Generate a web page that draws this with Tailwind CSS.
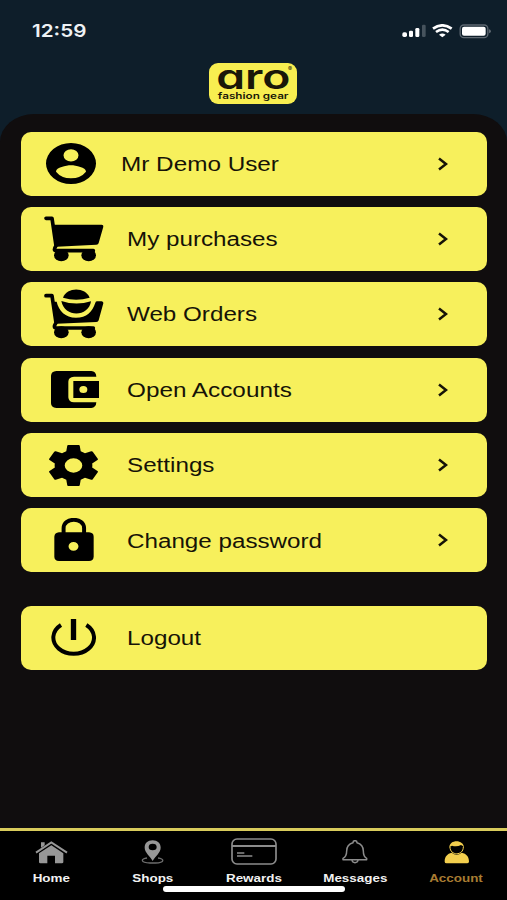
<!DOCTYPE html>
<html lang="en">
<head>
    <meta charset="UTF-8">
    <meta name="viewport" content="width=device-width, initial-scale=1.0">
    <title>Account</title>
    <script src="https://cdn.jsdelivr.net/npm/@tailwindcss/browser@4"></script>
</head>
<body class="bg-[#0e1e2a] font-['Liberation_Sans',Arial,sans-serif]">
    <div class="w-[507px] h-[900px] flex flex-col overflow-hidden">

        <!-- Status bar -->
        <div class="h-[63px] shrink-0 flex justify-between items-start pl-8 pr-[15px]">
            <span class="mt-[19px] text-[17.5px] leading-6 font-semibold font-['Inter',sans-serif] text-[#eef2f5] origin-left scale-x-[1.18]">12:59</span>
            <div class="mt-[24px] flex items-center">
                <svg class="w-6 h-[15px]" viewBox="66 42 72 45" preserveAspectRatio="none" fill="#fff">
                    <rect x="67" y="67" width="14" height="14" rx="5"/>
                    <rect x="87" y="62" width="12" height="19" rx="4"/>
                    <rect x="106" y="54" width="12" height="27" rx="4"/>
                    <rect x="126" y="44" width="11" height="37" rx="4" fill="#46535d"/>
                </svg>
                <svg class="ml-[6px] w-[21px] h-[15px]" viewBox="159 42 63 45" preserveAspectRatio="none" fill="none" stroke="#fff" stroke-width="8">
                    <path d="M162 56Q190 36 218 56"/>
                    <path d="M171 66Q190 52 209 66"/>
                    <path d="M180 74Q190 67 200 74L190 82Z" fill="#fff" stroke="none"/>
                </svg>
                <svg class="ml-[6px] w-[33px] h-[15px]" viewBox="240 41 99 45" preserveAspectRatio="none">
                    <rect x="243.500" y="44" width="83" height="38" rx="11" fill="none" stroke="#5d6770" stroke-width="4"/>
                    <rect x="249" y="49" width="71" height="27" rx="6" fill="#fff"/>
                    <path d="M330 57q6 1 6 6t-6 6z" fill="#5d6770"/>
                </svg>
            </div>
        </div>

        <!-- Brand -->
        <div class="h-[51px] shrink-0 flex justify-center items-start">
            <div class="relative w-[88px] h-[41px] -ml-px bg-[#f8ee50] rounded-[9px] text-[#1a1708] flex flex-col items-center font-['Inter',sans-serif] whitespace-nowrap">
                <span class="text-[34px] leading-[28px] h-[28px] font-semibold [font-feature-settings:'cv11'] scale-x-[1.36]">aro</span>
                <span class="text-[9px] leading-[9px] font-semibold scale-x-[1.3]">fashion gear</span>
                <span class="absolute right-[5px] top-[3px] text-[6px] leading-[6px]">®</span>
            </div>
        </div>

        <!-- Menu -->
        <main class="flex-1 bg-[#100d0e] rounded-t-[34px_28px] pt-[17.5px] pl-[21px] pr-5 flex flex-col gap-[11.400px] text-xl text-[#161307]">
            <a class="h-16 shrink-0 flex items-center bg-[#f7f05c] rounded-[10px] pr-[39px]">
                <span class="w-[100px] flex justify-center">
                    <svg class="w-[50px] h-[41px]" viewBox="2 2 20 20" preserveAspectRatio="none"><path d="M12 2a10 10 0 100 20 10 10 0 000-20zm0 3a3 3 0 110 6 3 3 0 010-6zm0 14.2a7.200 7.200 0 01-6-3.220c.03-1.990 4-3.080 6-3.080s5.970 1.090 6 3.080a7.200 7.200 0 01-6 3.220z"/></svg>
                </span>
                <span class="flex-1"><span class="inline-block origin-left scale-x-[1.215]">Mr Demo User</span></span>
                <svg class="w-[10px] h-[14px]" viewBox="0 0 10 14" fill="none" stroke="#161307" stroke-width="2.500"><path d="M1 1.500L8 7 1 12.500"/></svg>
            </a>
            <a class="h-16 shrink-0 flex items-center bg-[#f7f05c] rounded-[10px] pr-[39px]">
                <span class="w-[105.500px] flex justify-center">
                    <svg class="w-[60px] h-[46px]" viewBox="102 273 180 138">
                        <path d="M108 280H126L138 362Q128 377 139 377H250" fill="none" stroke="#000" stroke-width="11" stroke-linecap="round" stroke-linejoin="round"/>
                        <path d="M129 299H275Q281 299 280 305L266 354Q265 359 259 359L140 365Z"/>
                        <ellipse cx="154" cy="391" rx="22" ry="18"/>
                        <ellipse cx="236" cy="391" rx="22" ry="18"/>
                    </svg>
                </span>
                <span class="flex-1 pt-px"><span class="inline-block origin-left scale-x-[1.210]">My purchases</span></span>
                <svg class="w-[10px] h-[14px]" viewBox="0 0 10 14" fill="none" stroke="#161307" stroke-width="2.500"><path d="M1 1.500L8 7 1 12.500"/></svg>
            </a>
            <a class="h-16 shrink-0 flex items-center bg-[#f7f05c] rounded-[10px] pr-[39px]">
                <span class="w-[105.500px] flex justify-center">
                    <svg class="w-[60px] h-[50px]" viewBox="102 43 180 150">
                        <path d="M108 63H126L138 144Q128 160 139 160H250" fill="none" stroke="#000" stroke-width="11" stroke-linecap="round" stroke-linejoin="round"/>
                        <path d="M129 81H140C146 108 166 129 198 129C230 129 247 111 256 84Q257 80 262 80H275Q281 81 280 86L266 137Q265 142 259 142L140 147Z"/>
                        <path d="M159 69C170 36 227 36 239 69Q198 81 159 69Z"/>
                        <path d="M154 79Q198 94 243 80C237 127 164 131 154 79Z"/>
                        <ellipse cx="154" cy="173" rx="22" ry="18"/>
                        <ellipse cx="236" cy="173" rx="22" ry="18"/>
                    </svg>
                </span>
                <span class="flex-1"><span class="inline-block origin-left scale-x-[1.210]">Web Orders</span></span>
                <svg class="w-[10px] h-[14px]" viewBox="0 0 10 14" fill="none" stroke="#161307" stroke-width="2.500"><path d="M1 1.500L8 7 1 12.500"/></svg>
            </a>
            <a class="h-16 shrink-0 flex items-center bg-[#f7f05c] rounded-[10px] pr-[39px]">
                <span class="w-[107.500px] flex justify-center">
                    <svg class="w-[48px] h-[37px]" viewBox="123 288 144 111">
                        <path d="M139 288H244Q258 289 259 305H192Q175 306 175 320V367Q176 382 192 382H259Q258 398 244 399H139Q123 397 123 385V302Q124 289 139 288Z"/>
                        <path fill-rule="evenodd" d="M190 318H267V369H190ZM220 333a12 10.500 0 100 21 12 10.500 0 000-21Z"/>
                    </svg>
                </span>
                <span class="flex-1 -ml-[2px] pt-px"><span class="inline-block origin-left scale-x-[1.215]">Open Accounts</span></span>
                <svg class="w-[10px] h-[14px]" viewBox="0 0 10 14" fill="none" stroke="#161307" stroke-width="2.500"><path d="M1 1.500L8 7 1 12.500"/></svg>
            </a>
            <a class="h-16 shrink-0 flex items-center bg-[#f7f05c] rounded-[10px] pr-[39px]">
                <span class="w-[105.500px] flex justify-center">
                    <svg class="w-[49px] h-[41px]" viewBox="2.250 2 19.500 20" preserveAspectRatio="none"><path d="M19.430 12.980c.04-.32.07-.64.07-.98s-.03-.66-.07-.98l2.110-1.650c.19-.15.24-.42.12-.64l-2-3.460c-.12-.22-.39-.3-.61-.22l-2.490 1c-.52-.4-1.080-.73-1.690-.98l-.38-2.650A.488.488 0 0014 2h-4c-.25 0-.46.18-.49.42l-.38 2.650c-.61.25-1.170.59-1.690.98l-2.490-1c-.23-.09-.49 0-.61.22l-2 3.460c-.13.22-.07.49.12.64l2.110 1.650c-.04.32-.07.65-.07.98s.03.66.07.98l-2.110 1.650c-.19.15-.24.42-.12.64l2 3.460c.12.22.39.3.61.22l2.490-1c.52.4 1.080.73 1.690.98l.38 2.650c.03.24.24.42.49.42h4c.25 0 .46-.18.49-.42l.38-2.650c.61-.25 1.170-.59 1.690-.98l2.490 1c.23.09.49 0 .61-.22l2-3.460c.12-.22.07-.49-.12-.64zM12 15.500a3.500 3.500 0 110-7 3.500 3.500 0 010 7z"/></svg>
                </span>
                <span class="flex-1"><span class="inline-block origin-left scale-x-[1.210]">Settings</span></span>
                <svg class="w-[10px] h-[14px]" viewBox="0 0 10 14" fill="none" stroke="#161307" stroke-width="2.500"><path d="M1 1.500L8 7 1 12.500"/></svg>
            </a>
            <a class="h-16 shrink-0 flex items-center bg-[#f7f05c] rounded-[10px] pr-[39px]">
                <span class="w-[105.500px] flex justify-center pb-px">
                    <svg class="w-[40px] h-[43px]" viewBox="131 278 121 129" preserveAspectRatio="none">
                        <path d="M160 324V309C160 275 222 275 222 309V324" fill="none" stroke="#000" stroke-width="12"/>
                        <path fill-rule="evenodd" d="M146 321H237Q251 322 251 334V394Q250 407 237 407H146Q132 406 132 394V334Q133 322 146 321ZM190 350a15 13 0 100 26 15 13 0 000-26Z"/>
                    </svg>
                </span>
                <span class="flex-1 pt-px"><span class="inline-block origin-left scale-x-[1.210]">Change password</span></span>
                <svg class="w-[10px] h-[14px]" viewBox="0 0 10 14" fill="none" stroke="#161307" stroke-width="2.500"><path d="M1 1.500L8 7 1 12.500"/></svg>
            </a>
            <a class="h-16 shrink-0 mt-[22px] flex items-center bg-[#f7f05c] rounded-[10px]">
                <span class="w-[105.500px] flex justify-center">
                    <svg class="w-[45px] h-[37px]" viewBox="123 87 135 111" fill="none" stroke="#000">
                        <path d="M153 105A61 48.500 0 1 0 229 105" stroke-width="12"/>
                        <path d="M190.500 87V150" stroke-width="16"/>
                    </svg>
                </span>
                <span class="pt-px inline-block origin-left scale-x-[1.210]">Logout</span>
            </a>
        </main>

        <!-- Tab bar -->
        <nav class="relative h-[72px] shrink-0 bg-black border-t-[3px] border-[#d9cb5c] grid grid-cols-5 pl-px text-[11px] leading-[13px] font-bold text-[#f2f2f2] text-center">
            <a class="flex flex-col items-center">
                <span class="h-[36px] pt-[10px]">
                    <svg class="w-[33px] h-[23px]" viewBox="103 62 99 69" fill="#979797">
                        <path d="M106 97L152 66 199 97" fill="none" stroke="#979797" stroke-width="6"/>
                        <path d="M121 66H132V75L121 82Z"/>
                        <path d="M115 99L152 75 188 99V126Q187 129 184 129H163V106H140V129H119Q115 129 115 125Z"/>
                    </svg>
                </span>
                <span class="mt-[5px] scale-x-[1.22]">Home</span>
            </a>
            <a class="flex flex-col items-center">
                <span class="h-[36px] pt-[9px]">
                    <svg class="w-[23px] h-[24px]" viewBox="423 59 69 72">
                        <path d="M441 113C422 115 420 127 450 128H466C496 127 493 115 474 113" fill="none" stroke="#6e6e6e" stroke-width="4"/>
                        <path fill="#979797" fill-rule="evenodd" d="M458 60C443 60 434 69 434 82C434 97 450 107 458 122C466 107 482 97 482 82C482 69 472 60 458 60ZM458 70a12 10 0 110 20 12 10 0 010-20Z"/>
                    </svg>
                </span>
                <span class="mt-[5px] scale-x-[1.22]">Shops</span>
            </a>
            <a class="flex flex-col items-center">
                <span class="h-[36px] pt-[7px]">
                    <svg class="w-[46px] h-[27px]" viewBox="78 54 138 81" fill="none" stroke="#8c8c8c" stroke-width="5">
                        <rect x="81" y="57" width="132" height="75" rx="15"/>
                        <path d="M81 78H213" stroke-width="6"/>
                        <path d="M96 99H118M96 108H142" stroke-width="4"/>
                    </svg>
                </span>
                <span class="mt-[5px] scale-x-[1.22]">Rewards</span>
            </a>
            <a class="flex flex-col items-center">
                <span class="h-[36px] pt-[9px]">
                    <svg class="w-[26px] h-[24px]" viewBox="413 59 78 72" fill="none" stroke="#8c8c8c" stroke-width="4.500" stroke-linejoin="round">
                        <path d="M446 67Q446 61 452 61T458 67C473 71 477 80 477 92C477 106 481 111 487 114V118H416V114C422 111 427 106 427 92C427 80 431 71 446 67Z"/>
                        <path d="M443 119Q444 127 452 127T461 119"/>
                    </svg>
                </span>
                <span class="mt-[5px] scale-x-[1.22]">Messages</span>
            </a>
            <a class="flex flex-col items-center text-[#a87c32]">
                <span class="h-[36px] pt-[10px]">
                    <svg class="w-[25px] h-[23px]" viewBox="717 62 75 69" fill="#f3cf4e">
                        <path d="M719 124C719 108 727 100 740 97Q755 109 770 97C784 100 792 108 792 124Q791 129 786 129H725Q719 129 719 124Z"/>
                        <path d="M735 80C735 107 775 107 775 80" fill="none" stroke="#f3cf4e" stroke-width="3"/>
                        <path d="M733 82C732 56 777 56 777 82Q774 76 768 74Q755 81 741 76Q736 77 733 82Z"/>
                    </svg>
                </span>
                <span class="mt-[5px] scale-x-[1.22]">Account</span>
            </a>
            <!-- home indicator -->
            <div class="absolute left-[163px] top-[54.500px] w-[182px] h-[6px] rounded-full bg-white"></div>
        </nav>
    </div>
</body>
</html>
